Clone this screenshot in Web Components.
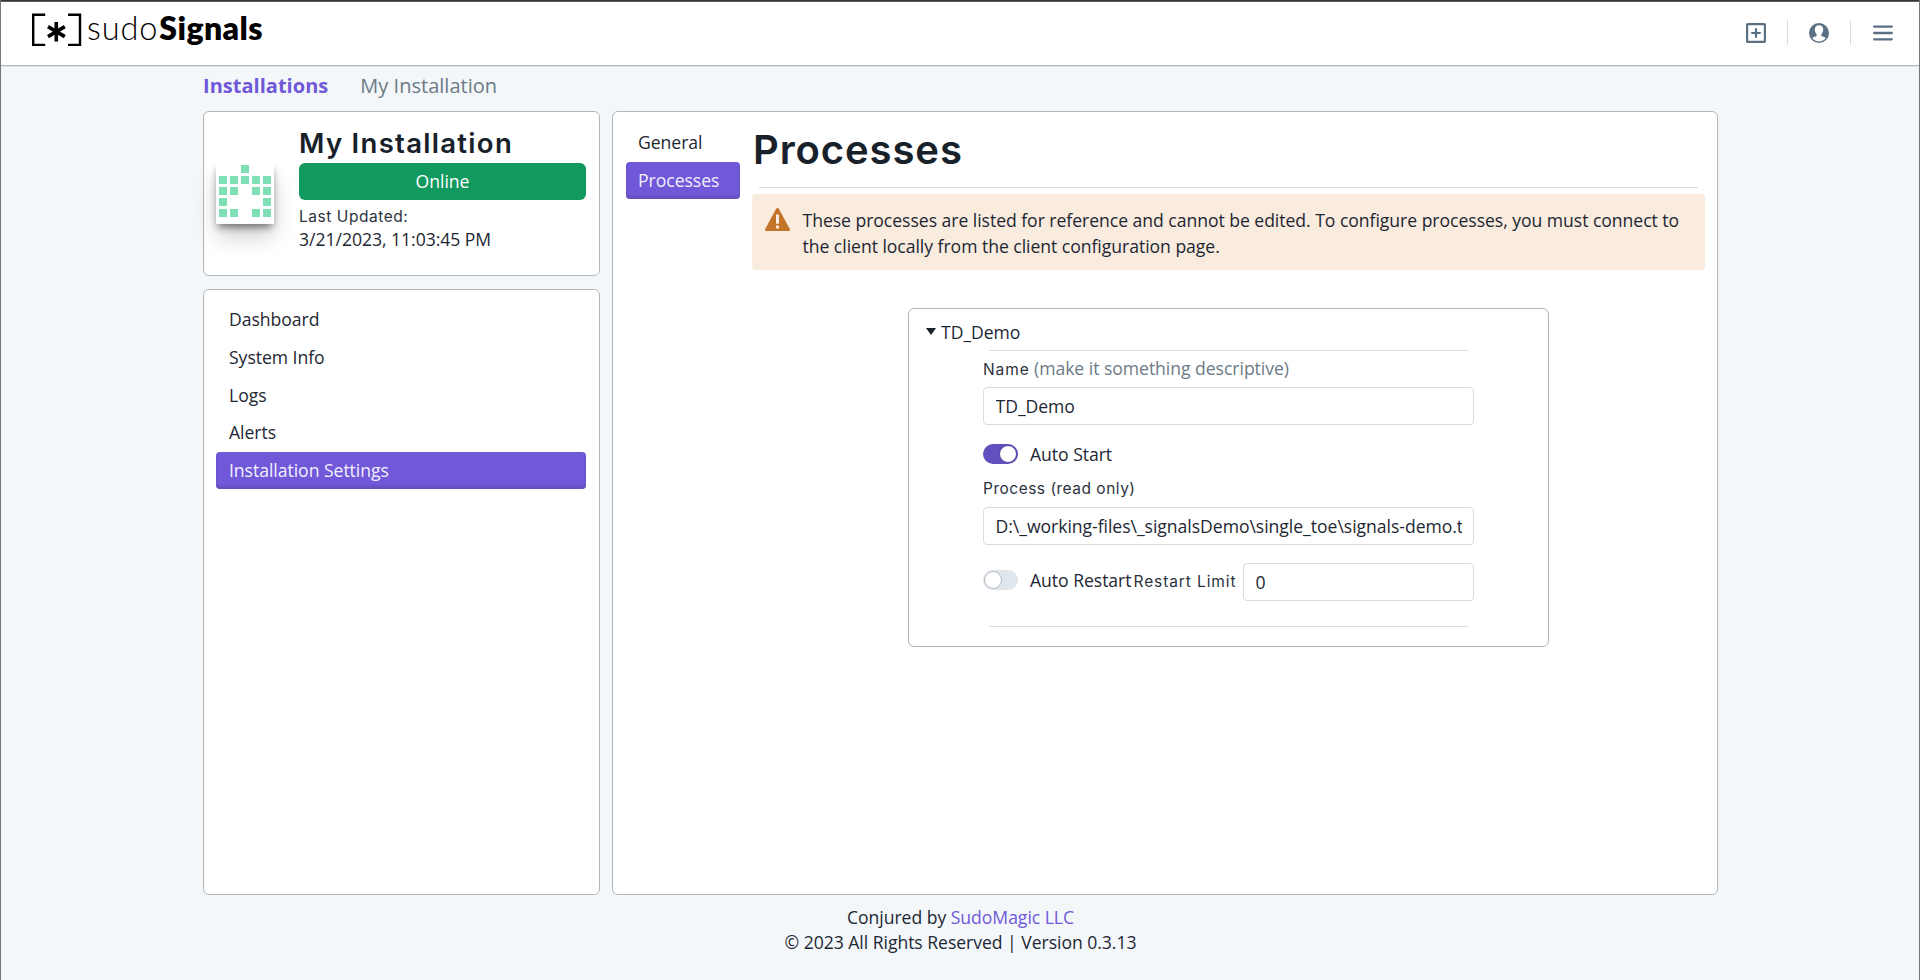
<!DOCTYPE html>
<html lang="en">
<head>
<meta charset="utf-8">
<title>sudoSignals</title>
<style>
html,body{margin:0;height:100%}
body{font-family:"Open Sans",sans-serif;font-size:17.6px;letter-spacing:-.04px;line-height:26px;color:#1d2733;background:#f3f7fa}
</style>
</head>
<body>
<signals-app></signals-app>
<script>
const define = (name, markup) => {
  const tpl = document.createElement('template');
  tpl.innerHTML = markup;
  customElements.define(name, class extends HTMLElement {
    constructor() {
      super();
      this.attachShadow({ mode: 'open' }).append(tpl.content.cloneNode(true));
    }
  });
};

define('brand-logo', `
<style>
:host{display:flex;align-items:flex-start;color:#000}
svg{display:block;margin:11px 5px 0 0}
.t{font:300 32.5px/38px Lato,sans-serif;margin-top:7px;white-space:nowrap}
.l{letter-spacing:.9px}
b{font-weight:800;font-size:32px;letter-spacing:.4px;margin-left:1px}
</style>
<svg width="51" height="34" viewBox="0 0 51 34" fill="none" stroke="#000">
<path stroke-width="2.4" d="M14.2 1.7H2.2v30.2h12M37 1.7h12v30.2H37"/>
<path stroke-width="3.6" d="M25.3 9v19.4M17 13.6l16.8 10M33.8 13.6l-16.8 10"/>
</svg><span class="t"><span class="l">sudo</span><b>Signals</b></span>`);

define('top-bar', `
<style>
:host{display:flex;justify-content:space-between;height:63px;background:#fff;border-bottom:1px solid #b4b4b4;box-shadow:0 1px 0 #e2e4e6;box-sizing:content-box}
brand-logo{margin-left:30px}
nav{display:flex;align-items:center;height:25px;margin:18px 26px 0 0}
i{width:1px;height:25px;background:#dbdbdb}
svg{display:block;width:20px;height:20px}
</style>
<brand-logo></brand-logo>
<nav>
<svg viewBox="0 0 20 20" fill="none" stroke="#5b7083"><rect x="1.1" y="1.1" width="17.8" height="17.8" rx=".6" stroke-width="2.2"/><path stroke-width="2.2" stroke-linecap="round" d="M10 6v8M6 10h8"/></svg>
<i style="margin:0 21px"></i>
<svg viewBox="0 0 20 20"><circle cx="10" cy="10" r="10" fill="#5b7083"/><path fill="#fff" d="M10 2.3c2.8 0 4.2 1.8 4.2 4.2 0 1.8-.7 3.6-1.8 4.7-.3 1.5.1 2 1.2 2.4 1.5.5 2.6.9 3.1 1.7-1.5 1.9-4 3.1-6.7 3.1s-5.2-1.2-6.7-3.1c.5-.8 1.6-1.2 3.1-1.7 1.1-.4 1.5-.9 1.2-2.4C6.5 10.1 5.8 8.3 5.8 6.5 5.8 4.1 7.2 2.3 10 2.3z"/></svg>
<i style="margin:0 22px 0 21px"></i>
<svg viewBox="0 0 20 20" fill="none" stroke="#5b7083" stroke-width="2.3" stroke-linecap="round"><path d="M1.2 3.6h17.6M1.2 10h17.6M1.2 16.3h17.6"/></svg>
</nav>`);

define('crumb-trail', `
<style>
:host{display:flex;gap:32px;font-size:20px;letter-spacing:.02px;line-height:28px;color:#6c7a86}
b{color:#7058d8;font-weight:700}
</style><b>Installations</b><span>My Installation</span>`);

define('ui-card', `
<style>:host{display:block;box-sizing:border-box;background:#fff;border:1px solid #b4b6b8;border-radius:6px}</style><slot></slot>`);

define('ui-label', `
<style>:host{display:inline-block;font:400 15.5px/22px Inter,sans-serif;letter-spacing:.55px;color:#2c3340;white-space:nowrap}</style><slot></slot>`);

define('ui-rule', `<style>:host{display:block;height:1px;background:#d9dbdc}</style>`);

define('menu-item', `
<style>
:host{display:block;height:37.6px;line-height:36.5px;box-sizing:border-box;padding:0 13px;border-radius:4px;color:#1d2733;white-space:nowrap}
:host([active]){background:#7058d8;color:#f3f0fd;box-shadow:inset 0 -3px 2px rgba(90,70,160,.45)}
</style><slot></slot>`);

define('pixel-avatar', `
<style>
:host{display:block;width:58px;height:61px;background:#fff;box-shadow:0 5px 8px -2px rgba(0,0,0,.5),0 14px 24px -2px rgba(0,0,0,.2);clip-path:inset(0 -40px -60px -40px)}
svg{display:block}
</style>
<svg width="58" height="61" fill="#7fdfb5"><path d="M25 2h8v8h-8zM3 13h8v8H3zM14 13h8v8h-8zM25 13h8v8h-8zM36 13h8v8h-8zM47 13h8v8h-8zM3 24h8v8H3zM14 24h8v8h-8zM36 24h8v8h-8zM47 24h8v8h-8zM3 35h8v8H3zM47 35h8v8h-8zM3 46h8v8H3zM14 46h8v8h-8zM36 46h8v8h-8zM47 46h8v8h-8z"/></svg>`);

define('installation-summary', `
<style>
:host{display:flex;padding:14px 13px 0 12px}
pixel-avatar{margin:37px 25px 0 0}
.info{flex:1;display:flex;flex-direction:column;align-items:flex-start}
h2{margin:-1px 0 1px;font:600 27.5px/36px Inter,sans-serif;letter-spacing:1.3px;color:#18202a;white-space:nowrap}
.status{align-self:stretch;height:37px;line-height:36px;background:#11995f;color:#fff;border-radius:6px;text-align:center;margin:1px 0 6px}
time{line-height:26px;margin-top:-2px}
</style>
<pixel-avatar></pixel-avatar>
<div class="info"><h2>My Installation</h2><div class="status">Online</div><ui-label>Last Updated:</ui-label><time>3/21/2023, 11:03:45 PM</time></div>`);

define('side-menu', `
<style>:host{display:block;padding:11.4px 13px 0 12px}</style>
<menu-item>Dashboard</menu-item><menu-item>System Info</menu-item><menu-item>Logs</menu-item><menu-item>Alerts</menu-item><menu-item active>Installation Settings</menu-item>`);

define('notice-box', `
<style>
:host{display:flex;box-sizing:border-box;height:76px;background:#f9ebde;border-radius:4px;padding:14px 13px 0}
svg{flex:none;display:block;margin-right:12.5px}
p{margin:-1px 0 0;line-height:26.4px;white-space:pre}
</style>
<svg width="25" height="23" viewBox="0 0 25 23"><path fill="#c27429" d="M12.5 0c.6 0 1 .3 1.3.8l11 20.2c.5 1 0 2-1.1 2H1.3c-1.1 0-1.6-1-1.1-2L11.2.8c.3-.5.7-.8 1.3-.8z"/><path fill="#f9ebde" d="M11 6.5h3v9.3h-3zM11 17.6h3v3h-3z"/></svg>
<p><slot></slot></p>`);

define('text-field', `
<style>:host{display:block;box-sizing:border-box;height:38px;line-height:36px;padding:0 11.5px;border:1px solid #d9dbdc;border-radius:4px;background:#fff;white-space:nowrap}
div{overflow:hidden;height:36px}</style><div><slot></slot></div>`);

define('toggle-switch', `
<style>
:host{display:flex;align-items:center;height:26px;white-space:nowrap}
.track{display:flex;box-sizing:border-box;width:35px;height:20px;border-radius:10px;background:#dfe6ec;padding:1px;margin-right:12px}
.knob{box-sizing:border-box;width:18px;height:18px;border-radius:50%;background:#fff;border:1px solid #b3bac1}
:host([on]) .track{background:#634fbd;justify-content:flex-end}
:host([on]) .knob{border-color:#51409d}
</style><span class="track"><span class="knob"></span></span><slot></slot>`);

define('process-card', `
<style>
:host{display:block}
ui-card{height:339px;padding:10px 74px 0}
.sum{display:flex;align-items:center;height:26px;margin-left:-57px}
.sum svg{margin:-1px 5px 0 0}
ui-rule{margin:5px 6px 0 6px}
.name{display:flex;align-items:baseline;height:26px;margin:4px 0 6px}
.name span{color:#6c7a86;margin-left:auto;margin-right:185px}
.row{display:flex;align-items:center;height:38px}
</style>
<ui-card>
<div class="sum"><svg width="10" height="7"><path d="M0 0h10L5 7z" fill="#18202a"/></svg>TD_Demo</div>
<ui-rule></ui-rule>
<div class="name"><ui-label style="letter-spacing:.9px">Name</ui-label><span>(make it something descriptive)</span></div>
<text-field>TD_Demo</text-field>
<toggle-switch on style="margin-top:16px">Auto Start</toggle-switch>
<ui-label style="display:block;margin:11px 0 7px;letter-spacing:.5px">Process (read only)</ui-label>
<text-field>D:\\_working-files\\_signalsDemo\\single_toe\\signals-demo.t</text-field>
<div class="row" style="margin-top:18px"><toggle-switch style="margin-top:-4px">Auto Restart</toggle-switch><ui-label style="margin:0 0 0 2px;letter-spacing:.9px">Restart Limit</ui-label><text-field style="width:231px;margin-left:auto">0</text-field></div>
<ui-rule style="margin-top:25px"></ui-rule>
</ui-card>`);

define('settings-panel', `
<style>
:host{display:flex;padding:12px 12px 0 13px;gap:12px}
nav{width:114px;flex:none}
nav menu-item{padding-left:12px}
section{flex:1;min-width:0}
h1{margin:0;padding-left:1px;height:63px;font:600 40px/51px Inter,sans-serif;letter-spacing:.9px;color:#18202a}
ui-rule{margin:0 7px 6px 7px}
process-card{width:641px;margin:38px 0 0 156px}
</style>
<nav><menu-item>General</menu-item><menu-item active>Processes</menu-item></nav>
<section><h1>Processes</h1><ui-rule></ui-rule>
<notice-box>These processes are listed for reference and cannot be edited. To configure processes, you must connect to
the client locally from the client configuration page.</notice-box>
<process-card></process-card></section>`);

define('page-footer', `
<style>:host{display:block;text-align:center;line-height:25px;padding-left:1px}span{color:#7058d8}</style>
<div>Conjured by <span>SudoMagic LLC</span></div><div>© 2023 All Rights Reserved | Version 0.3.13</div>`);

define('signals-app', `
<style>
:host{display:block;box-sizing:border-box;height:980px;overflow:hidden;border:solid #77777b;border-width:0 1px;background:#f3f7fa}
.edge{height:2px;background:linear-gradient(#38363b 50%,#5d5a60 50%)}
main{display:grid;grid-template-columns:397px 1106px;grid-template-rows:165px 606px;gap:13px 12px;margin:11px 0 0 202px}
.panel{grid-column:2;grid-row:1/3}
crumb-trail{margin:6px 0 0 202px}
page-footer{margin-top:10px}
</style>
<div class="edge"></div>
<top-bar></top-bar>
<crumb-trail></crumb-trail>
<main>
<ui-card><installation-summary></installation-summary></ui-card>
<ui-card class="panel"><settings-panel></settings-panel></ui-card>
<ui-card><side-menu></side-menu></ui-card>
</main>
<page-footer></page-footer>`);
</script>
</body>
</html>
